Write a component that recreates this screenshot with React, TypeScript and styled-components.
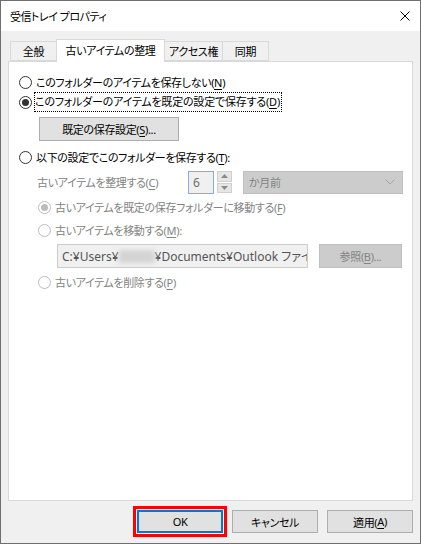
import React from 'react';
import styled, { createGlobalStyle } from 'styled-components';

const GlobalStyle = createGlobalStyle`
  html, body {
    margin: 0;
    padding: 0;
    background: #f0f0f0;
  }
  body {
    font-family: "Noto Sans", "Noto Sans CJK JP", sans-serif;
    font-size: 11px;
    letter-spacing: -0.35px;
    font-feature-settings: "palt";
    color: #000;
  }
  u {
    text-underline-offset: 2px;
  }
`;

const Window = styled.div`
  width: 421px;
  height: 544px;
  box-sizing: border-box;
  border: 1px solid #6f6f6f;
  display: flex;
  flex-direction: column;
  background: #f0f0f0;
`;

const TitleBar = styled.div`
  height: 30px;
  background: #fff;
  display: flex;
  align-items: center;
  justify-content: space-between;
  padding: 0 10px 0 9px;
  font-size: 11px;
  letter-spacing: -0.5px;
  line-height: 1;
`;

const Body = styled.div`
  flex: 1;
  display: flex;
  flex-direction: column;
  padding: 8px 7px 10px 7px;
`;

const TabStrip = styled.div`
  display: flex;
  align-items: flex-end;
  height: 22px;
  padding-left: 2px;
`;

const Tab = styled.div<{ $active?: boolean; $w: number }>`
  box-sizing: border-box;
  width: ${(p) => p.$w}px;
  height: ${(p) => (p.$active ? 23 : 20)}px;
  margin-bottom: ${(p) => (p.$active ? -1 : 0)}px;
  margin-left: -1px;
  &:first-child {
    margin-left: 0;
  }
  border: 1px solid #d9d9d9;
  border-bottom: ${(p) => (p.$active ? 'none' : '1px solid #d9d9d9')};
  background: ${(p) => (p.$active ? '#fff' : '#f0f0f0')};
  position: relative;
  z-index: ${(p) => (p.$active ? 2 : 1)};
  display: flex;
  align-items: center;
  justify-content: center;
  padding-bottom: ${(p) => (p.$active ? 3 : 0)}px;
  white-space: nowrap;
`;

const Panel = styled.div`
  flex: 1;
  background: #fff;
  border: 1px solid #d9d9d9;
  padding: 10px 8px 0 10px;
  display: flex;
  flex-direction: column;
`;

const RadioRow = styled.label<{ $disabled?: boolean; $indent?: number; $top?: number }>`
  display: flex;
  align-items: center;
  height: 20px;
  gap: 4px;
  margin-left: ${(p) => p.$indent ?? 0}px;
  margin-top: ${(p) => p.$top ?? 0}px;
  color: ${(p) => (p.$disabled ? '#838383' : '#000')};
  white-space: nowrap;
`;

const Circle = styled.span<{ $checked?: boolean; $disabled?: boolean }>`
  box-sizing: border-box;
  width: 13px;
  height: 13px;
  border-radius: 50%;
  border: 1px solid ${(p) => (p.$disabled ? '#bcbcbc' : '#333')};
  background: #fff;
  display: flex;
  align-items: center;
  justify-content: center;
  &::after {
    content: '';
    display: ${(p) => (p.$checked ? 'block' : 'none')};
    width: 7px;
    height: 7px;
    border-radius: 50%;
    background: ${(p) => (p.$disabled ? '#bcbcbc' : '#333')};
  }
`;

const FocusText = styled.span`
  outline: 1px dotted #000;
  outline-offset: 0;
  padding: 0 1px 0 0;
  margin-left: -1px;
  line-height: 18px;
  letter-spacing: -0.2px;
`;

const Button = styled.button<{ $w: number; $disabled?: boolean; $default?: boolean }>`
  box-sizing: border-box;
  width: ${(p) => p.$w}px;
  height: 23px;
  padding: 0;
  font: inherit;
  letter-spacing: inherit;
  font-feature-settings: "palt";
  background: ${(p) => (p.$disabled ? '#cccccc' : '#e1e1e1')};
  border: ${(p) => (p.$default ? '2px solid #0078d7' : `1px solid ${p.$disabled ? '#bfbfbf' : '#adadad'}`)};
  color: ${(p) => (p.$disabled ? '#838383' : '#000')};
  display: flex;
  align-items: center;
  justify-content: center;
  white-space: nowrap;
  outline: ${(p) => (p.$default ? '3px solid #ff0000' : 'none')};
  outline-offset: 1px;
`;

const PresetButton = styled(Button)`
  margin: 5px 0 0 20px;
  height: 24px;
`;

const BrowseButton = styled(Button)`
  height: 24px;
`;

const ArchiveRow = styled.div`
  display: flex;
  align-items: center;
  margin: 4px 0 0 18px;
  height: 22px;
  color: #838383;
`;

const ArchiveLabel = styled.span`
  width: 151px;
  flex: none;
`;

const SpinBox = styled.div`
  box-sizing: border-box;
  flex: none;
  width: 26px;
  height: 23px;
  border: 1px solid #8fa9d3;
  background: #f0f0f0;
  color: #6d6d6d;
  padding-left: 4px;
  font-size: 12px;
  display: flex;
  align-items: center;
`;

const SpinButtons = styled.div`
  box-sizing: border-box;
  flex: none;
  width: 15px;
  height: 22px;
  margin-left: 3px;
  display: flex;
  flex-direction: column;
  gap: 1px;
`;

const SpinHalf = styled.div`
  flex: 1;
  background: #e6e6e6;
  border: 1px solid #d0d0d0;
  display: flex;
  align-items: center;
  justify-content: center;
`;

const Combo = styled.div`
  box-sizing: border-box;
  flex: none;
  width: 160px;
  height: 23px;
  margin-left: 11px;
  background: #cccccc;
  border: 1px solid #bfbfbf;
  color: #838383;
  display: flex;
  align-items: center;
  justify-content: space-between;
  padding: 0 7px 0 5px;
`;

const PathRow = styled.div`
  display: flex;
  align-items: center;
  margin: 4px 0 0 38px;
  gap: 11px;
`;

const PathBox = styled.div`
  box-sizing: border-box;
  width: 251px;
  height: 24px;
  border: 1px solid #cccccc;
  background: #f0f0f0;
  color: #555;
  padding-left: 4px;
  font-size: 12px;
  letter-spacing: 0;
  display: flex;
  align-items: center;
  overflow: hidden;
  white-space: nowrap;
`;

const Blur = styled.span`
  display: inline-block;
  flex: none;
  width: 36px;
  height: 13px;
  background: #d4d4d4;
  filter: blur(2px);
`;

const Footer = styled.div`
  display: flex;
  justify-content: flex-end;
  gap: 9px;
  margin-top: 9px;
`;

const Chevron = () => (
  <svg width="10" height="6" viewBox="0 0 10 6">
    <path d="M0.5 0.5 L5 5 L9.5 0.5" fill="none" stroke="#a6a6a6" strokeWidth="1" />
  </svg>
);

const Arrow = ({ up }: { up?: boolean }) => (
  <svg width="7" height="4" viewBox="0 0 7 4">
    <path d={up ? 'M0 4 L3.5 0 L7 4 Z' : 'M0 0 L3.5 4 L7 0 Z'} fill="#8a8a8a" />
  </svg>
);

const CloseIcon = () => (
  <svg width="10" height="10" viewBox="0 0 10 10">
    <path d="M0.5 0.5 L9.5 9.5 M9.5 0.5 L0.5 9.5" stroke="#000" strokeWidth="1" />
  </svg>
);

export default function App() {
  return (
    <>
      <GlobalStyle />
      <Window>
        <TitleBar>
          <span>受信トレイ プロパティ</span>
          <CloseIcon />
        </TitleBar>
        <Body>
          <TabStrip>
            <Tab $w={47}>全般</Tab>
            <Tab $w={109} $active>
              古いアイテムの整理
            </Tab>
            <Tab $w={59}>アクセス権</Tab>
            <Tab $w={47}>同期</Tab>
          </TabStrip>
          <Panel>
            <RadioRow>
              <Circle />
              <span>
                このフォルダーのアイテムを保存しない(<u>N</u>)
              </span>
            </RadioRow>
            <RadioRow>
              <Circle $checked />
              <FocusText>
                このフォルダーのアイテムを既定の設定で保存する(<u>D</u>)
              </FocusText>
            </RadioRow>
            <PresetButton $w={140}>
              既定の保存設定(<u>S</u>)...
            </PresetButton>
            <RadioRow $top={6}>
              <Circle />
              <span>
                以下の設定でこのフォルダーを保存する(<u>T</u>):
              </span>
            </RadioRow>
            <ArchiveRow>
              <ArchiveLabel>
                古いアイテムを整理する(<u>C</u>)
              </ArchiveLabel>
              <SpinBox>6</SpinBox>
              <SpinButtons>
                <SpinHalf>
                  <Arrow up />
                </SpinHalf>
                <SpinHalf>
                  <Arrow />
                </SpinHalf>
              </SpinButtons>
              <Combo>
                <span>か月前</span>
                <Chevron />
              </Combo>
            </ArchiveRow>
            <RadioRow $disabled $indent={19} $top={4}>
              <Circle $checked $disabled />
              <span>
                古いアイテムを既定の保存フォルダーに移動する(<u>F</u>)
              </span>
            </RadioRow>
            <RadioRow $disabled $indent={19} $top={3}>
              <Circle $disabled />
              <span>
                古いアイテムを移動する(<u>M</u>):
              </span>
            </RadioRow>
            <PathRow>
              <PathBox>
                C:¥Users¥
                <Blur />
                ¥Documents¥Outlook ファイル
              </PathBox>
              <BrowseButton $w={83} $disabled>
                参照(<u>B</u>)...
              </BrowseButton>
            </PathRow>
            <RadioRow $disabled $indent={19} $top={4}>
              <Circle $disabled />
              <span>
                古いアイテムを削除する(<u>P</u>)
              </span>
            </RadioRow>
          </Panel>
          <Footer>
            <Button $w={86} $default>
              OK
            </Button>
            <Button $w={86}>キャンセル</Button>
            <Button $w={86}>
              適用(<u>A</u>)
            </Button>
          </Footer>
        </Body>
      </Window>
    </>
  );
}
